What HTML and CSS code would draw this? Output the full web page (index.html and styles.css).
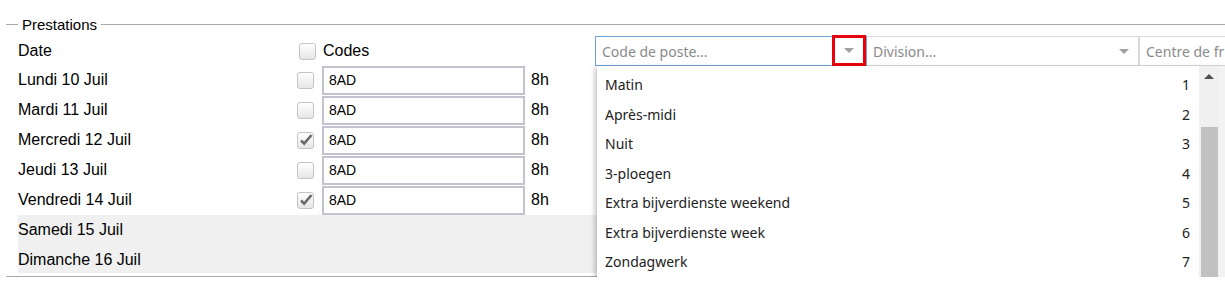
FILE: index.html
```html
<!DOCTYPE html>
<html lang="fr">
<head>
  <meta charset="UTF-8" />
  <title>Prestations</title>
  <link rel="stylesheet" href="styles.css">
</head>
<body>
  <fieldset class="prestations">
    <legend>Prestations</legend>

    <div class="grid">
      <div class="row head">
        <span class="date">Date</span>
        <span class="check"><span class="cb"></span></span>
        <span class="codes">Codes</span>
        <span></span>
        <div class="filters">
          <div class="combo focus">
            <span class="placeholder">Code de poste...</span>
            <span class="arrow marked"><span class="tri"></span></span>
          </div>
          <div class="combo">
            <span class="placeholder">Division...</span>
            <span class="arrow"><span class="tri"></span></span>
          </div>
          <div class="combo">
            <span class="placeholder">Centre de fr</span>
          </div>
        </div>
      </div>

      <div class="row">
        <span class="date">Lundi 10 Juil</span>
        <span class="check"><span class="cb"></span></span>
        <input class="code" type="text" value="8AD" />
        <span class="hours">8h</span>
      </div>
      <div class="row">
        <span class="date">Mardi 11 Juil</span>
        <span class="check"><span class="cb"></span></span>
        <input class="code" type="text" value="8AD" />
        <span class="hours">8h</span>
      </div>
      <div class="row">
        <span class="date">Mercredi 12 Juil</span>
        <span class="check"><span class="cb checked"><svg viewBox="0 0 16 16"><path d="M3 8.5l3.2 3.2L13.5 3" /></svg></span></span>
        <input class="code" type="text" value="8AD" />
        <span class="hours">8h</span>
      </div>
      <div class="row">
        <span class="date">Jeudi 13 Juil</span>
        <span class="check"><span class="cb"></span></span>
        <input class="code" type="text" value="8AD" />
        <span class="hours">8h</span>
      </div>
      <div class="row">
        <span class="date">Vendredi 14 Juil</span>
        <span class="check"><span class="cb checked"><svg viewBox="0 0 16 16"><path d="M3 8.5l3.2 3.2L13.5 3" /></svg></span></span>
        <input class="code" type="text" value="8AD" />
        <span class="hours">8h</span>
      </div>
      <div class="row weekend">
        <span class="date">Samedi 15 Juil</span>
      </div>
      <div class="row weekend last">
        <span class="date">Dimanche 16 Juil</span>
      </div>
    </div>

    <!-- liste ouverte du combo "Code de poste" -->
    <div class="dropdown">
      <ul class="options">
        <li><span>Matin</span><span class="num">1</span></li>
        <li><span>Après-midi</span><span class="num">2</span></li>
        <li><span>Nuit</span><span class="num">3</span></li>
        <li><span>3-ploegen</span><span class="num">4</span></li>
        <li><span>Extra bijverdienste weekend</span><span class="num">5</span></li>
        <li><span>Extra bijverdienste week</span><span class="num">6</span></li>
        <li><span>Zondagwerk</span><span class="num">7</span></li>
      </ul>
      <div class="scrollbar">
        <span class="up"></span>
        <span class="thumb"></span>
      </div>
    </div>
  </fieldset>
</body>
</html>
```

FILE: styles.css
```css
html, body {
  margin: 0;
  overflow: hidden;
  background: #fff;
}
body {
  font-family: "Liberation Sans", Arial, sans-serif;
  color: #000;
  padding-top: 16px;
}
.prestations {
  position: relative;
  margin: 0 0 0 6px;
  width: 1400px;
  padding: 2px 0 3px 12px;
  border: none;
  border-top: 1px solid #a9a9a9;
  border-bottom: 1px solid #a9a9a9;
}
.prestations legend {
  padding: 0 4px;
  font-size: 15px;
  line-height: 17px;
}
.grid {
  display: flex;
  flex-direction: column;
}
.row {
  display: grid;
  grid-template-columns: 279px 25px 203px 70px 1fr;
  height: 30px;
  align-items: center;
  font-size: 16px;
}
.row.weekend {
  background: #f0f0f0;
}
.row.weekend.last {
  height: 28px;
  align-items: start;
  padding-top: 6px;
  box-sizing: border-box;
}
.check {
  display: flex;
  align-items: center;
}
.cb {
  display: block;
  width: 15px;
  height: 15px;
  border: 1px solid #c4c4c4;
  border-radius: 3px;
  background: linear-gradient(#ffffff, #e6e6e6);
}
.head .cb {
  margin-left: 2px;
  margin-top: 1px;
}
.cb svg {
  display: block;
  width: 16px;
  height: 16px;
  margin: -1px 0 0 0;
}
.cb svg path {
  fill: none;
  stroke: #6a6a6a;
  stroke-width: 2.6;
}
.codes {
  padding-left: 1px;
}
.code {
  box-sizing: border-box;
  height: 29px;
  margin-top: 1px;
  width: 203px;
  border: 2px solid #c3c3cf;
  padding: 0 5px 2px;
  font-family: "Liberation Sans", Arial, sans-serif;
  font-size: 14px;
  color: #000;
  outline: none;
}
.hours {
  padding-left: 6px;
}
.filters {
  display: flex;
  height: 30px;
  align-self: start;
  margin-top: 1px;
}
.combo {
  position: relative;
  display: flex;
  align-items: center;
  justify-content: space-between;
  box-sizing: border-box;
  width: 272px;
  height: 30px;
  border: 1px solid #dadada;
  border-left: none;
  padding-left: 6px;
  font-family: "Noto Sans", sans-serif;
  font-size: 14px;
  color: #8a8a8a;
  white-space: nowrap;
}
.combo.focus {
  border: 1px solid #6fa0d6;
}
.combo + .combo + .combo {
  border-left: 1px solid #dadada;
}
.arrow {
  display: flex;
  align-items: center;
  justify-content: center;
  width: 28px;
  height: 100%;
}
.arrow.marked {
  box-sizing: border-box;
  width: 34px;
  height: 31px;
  margin-top: -2px;
  border: 3px solid #e8000b;
}
.tri {
  width: 0;
  height: 0;
  border-left: 5px solid transparent;
  border-right: 5px solid transparent;
  border-top: 5px solid #a0a0a0;
}
.dropdown {
  position: absolute;
  left: 591px;
  top: 33px;
  width: 622px;
  height: 220px;
  display: flex;
  background: #fff;
  box-shadow: -2px 2px 5px rgba(0, 0, 0, 0.25);
  border-right: 6px solid #f3f3f3;
}
.options {
  list-style: none;
  margin: 0;
  padding: 4px 0 0;
  flex: 1;
  font-family: "Noto Sans", sans-serif;
  font-size: 14px;
  color: #222;
}
.options li {
  display: flex;
  justify-content: space-between;
  align-items: center;
  height: 29.5px;
  padding: 0 9px 0 8px;
}
.scrollbar {
  position: relative;
  width: 20px;
  background: #f0f0f0;
}
.scrollbar .up {
  position: absolute;
  left: 5px;
  top: 8px;
  border-left: 5px solid transparent;
  border-right: 5px solid transparent;
  border-bottom: 5px solid #505050;
}
.scrollbar .thumb {
  position: absolute;
  left: 2px;
  right: 1px;
  top: 61px;
  bottom: 0;
  background: #c1c1c1;
}
```
